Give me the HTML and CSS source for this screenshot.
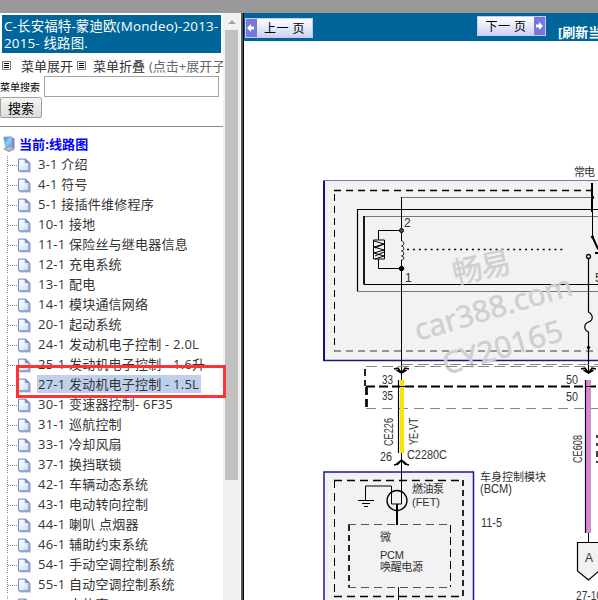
FILE: index.html
```
<!DOCTYPE html>
<html lang="zh-CN">
<head>
<meta charset="utf-8">
<title>线路图</title>
<link rel="stylesheet" href="styles.css">
</head>
<body>
<svg class="defs" width="0" height="0">
  <defs>
    <linearGradient id="paper" x1="0" y1="0" x2="1" y2="1"><stop offset="0" stop-color="#fff"/><stop offset=".45" stop-color="#eef5ff"/><stop offset="1" stop-color="#b4d5fb"/></linearGradient>
    <linearGradient id="screen" x1="0" y1="0" x2="1" y2="1"><stop offset="0" stop-color="#2679d8"/><stop offset=".5" stop-color="#86d4fa"/><stop offset="1" stop-color="#3d9ce8"/></linearGradient>
    <symbol id="doc" viewBox="0 0 13 15">
      <path d="M1.5 13.8H12V5" fill="none" stroke="#b9b9c8" stroke-width="1.6"/>
      <path d="M.6 1.1h7l3.4 3.4v8.4H.6z" fill="url(#paper)" stroke="#6c7fbd"/>
      <path d="M7.3 1.1v3.5H11z" fill="#8fa2da" stroke="#5e70b0" stroke-width=".7"/>
    </symbol>
  </defs>
</svg>
<div class="topbar"></div>
<div class="frames">
  <aside class="side">
    <div class="panel">
      <h1 class="title">C-长安福特-蒙迪欧(Mondeo)-2013-<br>2015- 线路图.</h1>
      <div class="tools">
        <svg class="sq" viewBox="0 0 9 9"><path d="M.5.5h8v8h-8z" fill="#fff" stroke="#777"/><path d="M2 2.5h5M2 4.5h5M2 6.5h5" stroke="#000"/></svg><span class="expand">菜单展开</span>
        <svg class="sq" viewBox="0 0 9 9"><path d="M.5.5h8v8h-8z" fill="#fff" stroke="#777"/><path d="M2 2.5h5M2 4.5h5M2 6.5h5" stroke="#000"/></svg><span class="fold">菜单折叠</span><span class="hint">(点击+展开子</span>
      </div>
      <div class="search"><label for="q">菜单搜索</label><input id="q" type="text"></div>
      <button class="go">搜索</button>
      <div class="rule"></div>
      <div class="root"><svg class="pc" viewBox="0 0 12 16"><path d="M1 13l4-2.500 6 .5v2L6 15.500z" fill="#b9b9cc" stroke="#77778f" stroke-width=".8"/><path d="M9 1.500l2.500 1v8.500L9 12z" fill="#8583a8"/><path d="M.7 1.200L8.800.8l.8 9-6.800 1.200z" fill="url(#screen)" stroke="#8d9bb8" stroke-width=".8"/></svg><b>当前:线路图</b></div>
      <ul class="tree">
        <li><svg><use href="#doc"/></svg><span>3-1 介绍</span></li>
        <li><svg><use href="#doc"/></svg><span>4-1 符号</span></li>
        <li><svg><use href="#doc"/></svg><span>5-1 接插件维修程序</span></li>
        <li><svg><use href="#doc"/></svg><span>10-1 接地</span></li>
        <li><svg><use href="#doc"/></svg><span>11-1 保险丝与继电器信息</span></li>
        <li><svg><use href="#doc"/></svg><span>12-1 充电系统</span></li>
        <li><svg><use href="#doc"/></svg><span>13-1 配电</span></li>
        <li><svg><use href="#doc"/></svg><span>14-1 模块通信网络</span></li>
        <li><svg><use href="#doc"/></svg><span>20-1 起动系统</span></li>
        <li><svg><use href="#doc"/></svg><span>24-1 发动机电子控制 - 2.0L</span></li>
        <li><svg><use href="#doc"/></svg><span>25-1 发动机电子控制 - 1.6升</span></li>
        <li class="current"><svg><use href="#doc"/></svg><span>27-1 发动机电子控制 - 1.5L</span><i class="mark"></i></li>
        <li><svg><use href="#doc"/></svg><span>30-1 变速器控制- 6F35</span></li>
        <li><svg><use href="#doc"/></svg><span>31-1 巡航控制</span></li>
        <li><svg><use href="#doc"/></svg><span>33-1 冷却风扇</span></li>
        <li><svg><use href="#doc"/></svg><span>37-1 换挡联锁</span></li>
        <li><svg><use href="#doc"/></svg><span>42-1 车辆动态系统</span></li>
        <li><svg><use href="#doc"/></svg><span>43-1 电动转向控制</span></li>
        <li><svg><use href="#doc"/></svg><span>44-1 喇叭 点烟器</span></li>
        <li><svg><use href="#doc"/></svg><span>46-1 辅助约束系统</span></li>
        <li><svg><use href="#doc"/></svg><span>54-1 手动空调控制系统</span></li>
        <li><svg><use href="#doc"/></svg><span>55-1 自动空调控制系统</span></li>
        <li><svg><use href="#doc"/></svg><span>56-1 大故事</span></li>
      </ul>
    </div>
    <div class="scroll"><svg viewBox="0 0 15 17"><path d="M3 11l4-4 4 4z" fill="#a3a3a3"/></svg><div class="thumb"></div></div>
  </aside>
  <main class="main">
    <header class="bar">
      <a class="btn prev"><svg viewBox="0 0 11 17"><path d="M1 8.500l4-4v2.500h3v3H5v2.500z" fill="#fff"/></svg><span>上一 页</span></a>
      <a class="btn next"><span>下一 页</span><svg viewBox="0 0 11 17"><path d="M9 8.500l-4-4v2.500H2v3h3v2.500z" fill="#fff"/></svg></a>
      <b class="refresh">[刷新当</b>
    </header>
    <svg class="diagram" viewBox="244 41 354 559" fill="none" stroke="#000">
      <!-- power distribution box -->
      <path d="M324 181H600V361H324z" fill="#f2f2f2" stroke="none"/>
      <path d="M323 180.500H600" stroke="#7777bb"/>
      <path d="M324 181V361" stroke="#11117c" stroke-width="2"/>
      <path d="M323 360.500H600" stroke="#18188a" stroke-width="1.300"/>
      <path d="M334 190.500H600" stroke-width="1.600" stroke-dasharray="7 5"/>
      <path d="M334.500 194V351" stroke-dasharray="7 5"/>
      <path d="M334 351H600" stroke="#777781" stroke-width="1.600" stroke-dasharray="7 5"/>
      <path d="M401.500 197.500H592" stroke="#777"/>
      <path d="M357.500 291V209.500H600" stroke-width="1.200"/><path d="M357 291.500H600" stroke="#777"/>
      <path d="M364 216.500H600" stroke="#777"/><path d="M364 216V284.500" stroke-width="1.800"/><path d="M364 284.500H600"/>
      <!-- relay coil -->
      <path d="M401.500 197V241c3 0 3 5 0 5 3 0 3 5 0 5 3 0 3 5 0 5 3 0 3 4 0 4V372M401 230.500H378.500V240M378.500 259V268.500H401"/>
      <path d="M373.500 240H384.500V259H373.500z"/><path d="M374 241l10 3-10 3 10 3-10 3 10 3-9 3M375 248l9-4M375 256l9-4"/>
      <circle cx="401.500" cy="230.500" r="2" fill="#555"/><circle cx="401.500" cy="268.500" r="2.200" fill="#000"/>
      <path d="M407 249.500H564" stroke-width="1.700" stroke-dasharray="2 3.900"/>
      <!-- switch and fuse -->
      <path d="M592 183V212" stroke-width="2"/><path d="M592.500 210V237L599 251"/><circle cx="592.500" cy="197.500" r="1.200" fill="#000"/><circle cx="592.500" cy="237" r="1.200" fill="#000"/><path d="M595 253h4M593 238l5 11" stroke-width="2"/>
      <circle cx="588.500" cy="256.500" r="2" fill="#fff" stroke-width="1.300"/>
      <path d="M588.500 259V312c5 3 5 8 0 10-5 2-5 8 0 10V372" stroke-width="1.200"/><circle cx="588.500" cy="347.500" r="1.200" fill="#000"/>
      <g class="watermark"><text transform="translate(455 284) rotate(-12)" textLength="59">畅易</text><text transform="translate(418 341) rotate(-16.500)" textLength="163" lengthAdjust="spacingAndGlyphs">car388.com</text><text transform="translate(446 375) rotate(-16.500)" textLength="124" lengthAdjust="spacingAndGlyphs">CY20165</text></g>
      <!-- connector band -->
      <g stroke="#888"><path d="M402 364.500H600" stroke-dasharray="11 5"/><path d="M366 366.500H600" stroke-dasharray="11 5"/><path d="M366 408.500H600" stroke-dasharray="10 6"/></g>
      <path d="M365 369V386" stroke-width="1.700" stroke-dasharray="7 4"/><path d="M366.500 387V409" stroke-width="2.700" stroke-dasharray="8 4"/>
      <path d="M366 386.500H600" stroke-width="2" stroke-dasharray="9 4"/>
      <path d="M394 369l4-1 3.500 5 3.500-5 4 1M401.500 373l-5-3M401.500 373l5-3" stroke-width="1.500"/>
      <path d="M581 369l4-1 3.500 5 3.500-5 4 1M588.500 373l-5-3M588.500 373l5-3" stroke-width="1.500"/>
      <path d="M401.500 372V459"/><path d="M402 380V453" stroke="#f7e600" stroke-width="4"/><path d="M398.500 380V453" stroke-width="1.200"/><path d="M399 386.500H405"/>
      <path d="M588.500 533V542"/><path d="M588.500 380V533" stroke="#d987d3" stroke-width="5"/><path d="M585.500 380V533" stroke-width="1.200"/><path d="M590.500 380V533" stroke="#b79abc" stroke-width="1"/><path d="M585 386.500H591"/>
      <!-- body control module -->
      <path d="M324 472H473.500V602H324z" fill="#f2f2f2" stroke="#1818a0" stroke-width="1.500"/>
      <path d="M334 480.500H464" stroke-width="1.300" stroke-dasharray="8 5"/><path d="M334.500 480V596" stroke-dasharray="8 5"/><path d="M463 480V596" stroke-width="1.700" stroke-dasharray="6 4"/><path d="M334 596.500H464" stroke-width="1.300" stroke-dasharray="8 5"/>
      <path d="M348 524.500H451M348 587.500H451" stroke="#555" stroke-dasharray="8 5"/><path d="M349 525V587" stroke-width="1.700" stroke-dasharray="6 4"/><path d="M450.500 525V587" stroke-dasharray="8 4"/>
      <path d="M401.500 459V504H391.500V486H365.500V500M358 500.500H374M362 503.500H370M364 506.500H368"/>
      <circle cx="397" cy="500.500" r="10" stroke-width="1.300"/><path d="M397 504V525" stroke-width="2"/><path d="M398.500 587V600"/>
      <path d="M394 465l4-1 3.500-4 3.500 4 4 1M401.500 460l-5 4M401.500 460l5 4" stroke-width="1.500"/>
      <path d="M577.500 542.500H600V570L588.500 580 577.500 571z" fill="#f2f2f2" stroke-width="1.200"/>
      <g class="lbl" stroke="none">
        <text class="zh" x="574" y="176" textLength="21">常电</text>
        <text x="404" y="227">2</text><text x="405" y="282">1</text><text x="595" y="282">5</text>
        <text x="382" y="384" textLength="11" lengthAdjust="spacingAndGlyphs">33</text><text x="382" y="400" textLength="11" lengthAdjust="spacingAndGlyphs">35</text><text x="380" y="460.500" textLength="12" lengthAdjust="spacingAndGlyphs">26</text>
        <text x="407" y="459" textLength="40" lengthAdjust="spacingAndGlyphs">C2280C</text>
        <text x="566" y="384" textLength="12" lengthAdjust="spacingAndGlyphs">50</text><text x="566" y="401" textLength="12" lengthAdjust="spacingAndGlyphs">50</text>
        <text transform="translate(393 446) rotate(-90)" textLength="28" lengthAdjust="spacingAndGlyphs">CE226</text><text transform="translate(418 445) rotate(-90)" textLength="27" lengthAdjust="spacingAndGlyphs">YE-VT</text><text transform="translate(582 463) rotate(-90)" textLength="28" lengthAdjust="spacingAndGlyphs">CE608</text>
        <text class="zh" x="412" y="493" textLength="32">燃油泵</text><text class="zh" x="412" y="506" textLength="28">(FET)</text>
        <text class="zh" x="380" y="541">微</text><text class="zh" x="380" y="559" textLength="24">PCM</text><text class="zh" x="380" y="571" textLength="43">唤醒电源</text>
        <text class="zh" x="480" y="481" textLength="66">车身控制模块</text><text x="480" y="493" textLength="32" lengthAdjust="spacingAndGlyphs">(BCM)</text><text x="481" y="527" textLength="21" lengthAdjust="spacingAndGlyphs">11-5</text>
        <text x="585" y="562">A</text><text x="576" y="600" textLength="26" lengthAdjust="spacingAndGlyphs">27-10</text>
      </g>
      <path d="M597 435v3M597 443v3M597 451v6M597 461v2" stroke-width="1.500"/>
    </svg>
  </main>
</div>
</body>
</html>
```
FILE: styles.css
```
* { box-sizing: border-box; }
body { margin: 0; width: 598px; height: 600px; overflow: hidden; background: #fff; font: 13px/20px "Open Sans", "Noto Sans CJK SC", sans-serif; color: #333; }
.defs { display: block; height: 0; }
.topbar { height: 13px; background: #999; }
.frames { display: flex; height: 587px; }
.side { display: flex; width: 244px; border-right: 1px solid #000; box-shadow: inset -2px 0 #555; }
.panel { width: 223px; height: 587px; white-space: nowrap; flex: none; }
.title { margin: 2px 2px 0; width: 219px; height: 38px; padding: 3px 2px 0; background: #069; color: #fff; font-size: 13.4px; line-height: 17px; font-weight: 400; letter-spacing: .18px; }
.tools { display: flex; align-items: center; height: 21px; margin-top: 1px; padding: 2px 0 0 2px; overflow: hidden; color: #666; }
.sq { width: 9px; height: 9px; flex: none; }
.expand { margin: 0 4px 0 10px; color: #333; }
.fold { margin: 0 4px 0 7px; color: #333; }
.search { display: flex; align-items: center; }
.search label { width: 44px; font: 10px/20px "Noto Sans CJK SC", sans-serif; color: #000; padding-top: 2px; }
.search input { width: 175px; height: 21px; border: 1px solid #a4a4a4; padding: 0; background: #fff; }
.go { display: block; width: 42px; height: 21px; padding: 0; border: 1px solid #a0a0a0; border-radius: 2px; background: linear-gradient(#f5f5f5, #ddd); font: 13px/18px "Noto Sans CJK SC", sans-serif; color: #000; }
.rule { height: 1px; margin: 8px 0 7px; background: #888; }
.root { display: flex; align-items: center; height: 20px; color: #00f; padding-left: 3px; }
.root b { letter-spacing: .1px; }
.pc { width: 12px; height: 16px; margin-right: 4px; }
.tree { height: 446px; margin: 0; padding: 0; list-style: none; }
.tree li { display: flex; align-items: center; height: 20px; margin-left: 7px; padding-left: 11px; background: linear-gradient(#fff, #fff) 0 0 / 1px 2px no-repeat, repeating-linear-gradient(90deg, #888 0 1px, transparent 1px 2px) 1px 11px / 10px 1px no-repeat, repeating-linear-gradient(#888 0 1px, transparent 1px 2px) 0 0 / 1px 20px no-repeat; }
.tree svg { width: 13px; height: 15px; margin: 3px 5px 0 0; flex: none; }
.tree span { padding: 0 2px 0 1px; margin-left: 1px; line-height: 18px; letter-spacing: .22px; }
.tree .current { position: relative; }
.current span { background: #bfd0ec; }
.mark { position: absolute; z-index: 1; left: 9px; top: -9px; width: 210px; height: 33px; border: 3px solid #f33; }
.scroll { width: 17px; padding: 0 2px; background: #f1f1f1; }
.scroll svg { display: block; width: 15px; height: 17px; }
.thumb { width: 13px; height: 450px; background: #c1c1c1; }
.main { width: 354px; }
.bar { display: flex; align-items: flex-start; height: 28px; background: #069; color: #fff; }
.btn { display: flex; height: 20px; border: 1px solid #4a49a6; outline: 1px solid #c9c9f2; outline-offset: -1px; background: linear-gradient(#fff, #ccd0f8); color: #000; font: 400 12px/17px "Noto Sans CJK SC", sans-serif; letter-spacing: .6px; }
.btn svg { width: 11px; height: 18px; background: #7778dc; flex: none; }
.btn span { flex: 1; text-align: center; }
.prev { width: 68px; margin: 5px 0 0 1px; }
.next { width: 69px; margin: 3px 0 0 164px; }
.refresh { margin: 10px 0 0 12px; width: 40px; overflow: hidden; white-space: nowrap; font-size: 13px; line-height: 18px; }
.diagram { display: block; width: 354px; height: 559px; font-family: "Liberation Sans", "Noto Sans CJK SC", sans-serif; }
.lbl { fill: #333; font-size: 12px; }
.lbl .zh { font-size: 11px; }
.watermark { fill: #cfcfcf; stroke: #cfcfcf; stroke-width: .4; font: 30px "Noto Sans", "Noto Sans CJK SC", sans-serif; }
```
